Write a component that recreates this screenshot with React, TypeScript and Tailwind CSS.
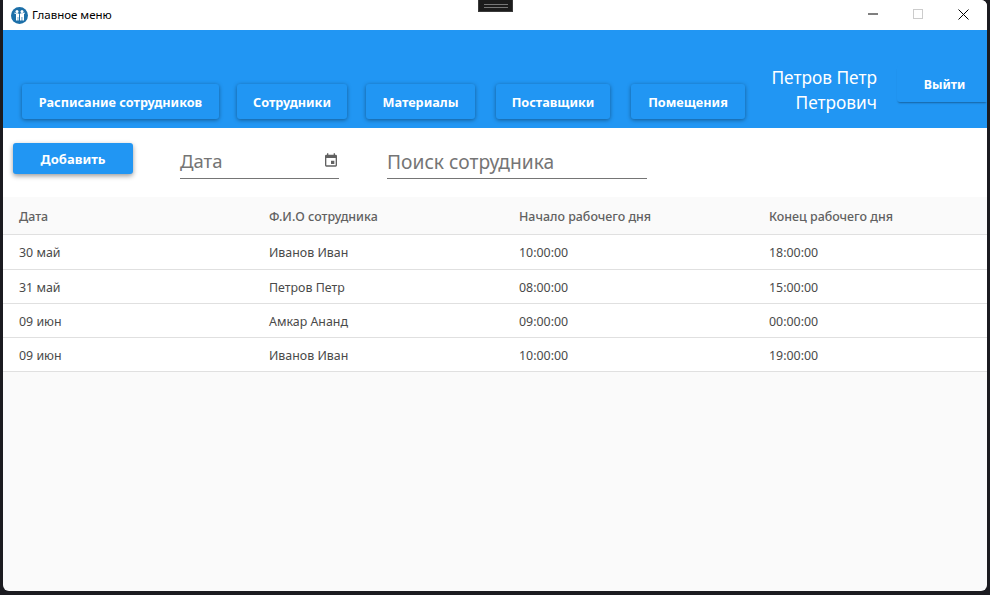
const font = { fontFamily: '"Noto Sans", "Open Sans", sans-serif' }

const navItems = [
  { label: 'Расписание сотрудников', width: 'w-[197px]', gap: 'mr-[18px]' },
  { label: 'Сотрудники', width: 'w-[110px]', gap: 'mr-[19px]' },
  { label: 'Материалы', width: 'w-[109px]', gap: 'mr-[21px]' },
  { label: 'Поставщики', width: 'w-[114px]', gap: 'mr-[21px]' },
  { label: 'Помещения', width: 'w-[114px]', gap: '' }
]

const rows = [
  ['30 май', 'Иванов Иван', '10:00:00', '18:00:00', 'h-[35px]'],
  ['31 май', 'Петров Петр', '08:00:00', '15:00:00', 'h-[34px]'],
  ['09 июн', 'Амкар Ананд', '09:00:00', '00:00:00', 'h-[34px]'],
  ['09 июн', 'Иванов Иван', '10:00:00', '19:00:00', 'h-[34px]']
]

const headers = ['Дата', 'Ф.И.О сотрудника', 'Начало рабочего дня', 'Конец рабочего дня']

const AppIcon = () => (
  <svg width="17" height="17" viewBox="0 0 17 17">
    <circle cx="8.5" cy="8.5" r="8.5" fill="#1c6fa8" />
    <circle cx="6" cy="4.6" r="1.5" fill="#fff" />
    <circle cx="11" cy="4.6" r="1.5" fill="#fff" />
    <path d="M3.2 6.4 5 7v6.5h1.7V10h.6v3.5H8V7.4L9 7v6.5h1.6V10h.7v3.5H13V7l1-.8-.6-.8-2 .9h-1.6L8.5 7.2 6.8 6.3H5L3.6 5.6z" fill="#fff" />
  </svg>
)

export default function App() {
  return (
    <div className="h-[595px] w-[990px] overflow-hidden bg-[#1b1b20] pl-[3px] pr-[3px] pb-[4px]" style={font}>
      <div className="relative flex h-full flex-col overflow-hidden rounded-b-[6px] rounded-tr-[6px] bg-[#fafafa]">
        <div className="absolute left-[475px] top-0 flex h-[12px] w-[35px] flex-col items-center justify-center gap-[2px] border border-t-0 border-[#3a3a3a] bg-[#1c1c1c]">
          <div className="h-px w-[24px] bg-[#777]" />
          <div className="h-px w-[24px] bg-[#777]" />
        </div>

        <div className="flex h-[30px] shrink-0 items-center bg-white pl-[8px]">
          <AppIcon />
          <span className="ml-[4px] text-[11.5px] text-black">Главное меню</span>
          <div className="ml-auto flex items-center pb-[2px]">
            <svg width="10" height="10" viewBox="0 0 10 10" className="mr-[35px]">
              <path d="M0 5h10" stroke="#000" strokeWidth="1" />
            </svg>
            <svg width="10" height="10" viewBox="0 0 10 10" className="mr-[35px]">
              <rect x="0.5" y="0.5" width="9" height="9" fill="none" stroke="#ccc" />
            </svg>
            <svg width="11" height="11" viewBox="0 0 11 11" className="mr-[18px]">
              <path d="M.5.5l10 10M10.5.5l-10 10" stroke="#000" strokeWidth="1" />
            </svg>
          </div>
        </div>

        <div className="flex h-[98px] shrink-0 bg-[#2196f3] pl-[19px]">
          {navItems.map(item => (
            <button
              key={item.label}
              className={`${item.width} ${item.gap} mt-[54px] h-[35px] rounded-[3px] bg-[#2196f3] pt-[2px] text-[12.7px] font-bold text-white shadow-[0_1px_4px_rgba(0,0,0,0.4)]`}
            >
              {item.label}
            </button>
          ))}
          <div className="ml-[26px] mt-[35px] w-[106px] shrink-0 whitespace-nowrap text-right text-[17.3px] leading-[25px] text-white">
            Петров Петр
            <br />
            Петрович
          </div>
          <button className="ml-[20px] mt-[36px] h-[36px] w-[90px] rounded-l-[3px] bg-[#2196f3] pl-[5px] pt-[2px] text-[12.3px] font-bold text-white shadow-[0_2px_2px_-1px_rgba(0,0,0,0.35)]">
            Выйти
          </button>
        </div>

        <div className="flex h-[69px] shrink-0 bg-white pl-[10px]">
          <button className="mt-[15px] h-[31px] w-[120px] rounded-[3px] bg-[#2196f3] pt-[2px] text-[13px] font-bold text-white shadow-[0_2px_5px_rgba(0,0,0,0.4)]">
            Добавить
          </button>
          <div className="ml-[47px] mt-[20px] flex h-[31px] w-[159px] items-center justify-between border-b border-[#757575] pb-[4px]">
            <span className="text-[18.5px] text-[#757575]">Дата</span>
            <svg width="16" height="16" viewBox="0 0 24 24" className="mb-[3px]">
              <path
                fill="#616161"
                d="M19 4h-1V2h-2v2H8V2H6v2H5a2 2 0 0 0-2 2v14a2 2 0 0 0 2 2h14a2 2 0 0 0 2-2V6a2 2 0 0 0-2-2zm0 16H5V9h14v11zM12 13h5v5h-5z"
              />
            </svg>
          </div>
          <div className="ml-[48px] mt-[20px] flex h-[31px] w-[260px] items-center border-b border-[#757575] pb-[2px]">
            <span className="whitespace-nowrap text-[19.2px] text-[#757575]">Поиск сотрудника</span>
          </div>
        </div>

        <div className="flex h-[38px] shrink-0 items-center border-b border-[#e0e0e0] bg-[#fafafa] pl-[16px] pt-[4px] text-[12.45px] font-medium text-[#616161]">
          {headers.map(header => (
            <div key={header} className="w-[250px] shrink-0">
              {header}
            </div>
          ))}
        </div>

        {rows.map((row, i) => (
          <div key={i} className={`${row[4]} flex shrink-0 items-center border-b border-[#e0e0e0] bg-white pl-[16px] pt-[3px] text-[12.4px] text-[#4a4a4a]`}>
            {row.slice(0, 4).map((cell, j) => (
              <div key={j} className="w-[250px] shrink-0">
                {cell}
              </div>
            ))}
          </div>
        ))}
      </div>
    </div>
  )
}
